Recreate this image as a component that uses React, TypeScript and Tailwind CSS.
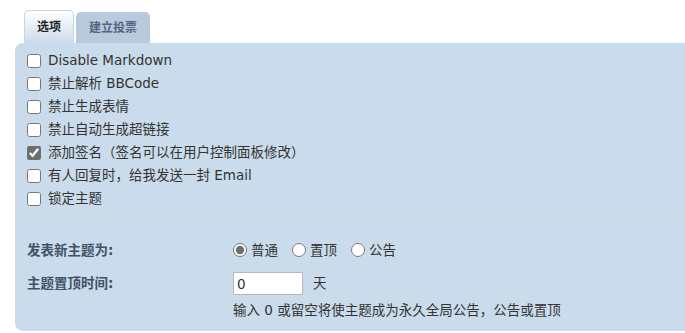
import React from "react";

const font = { fontFamily: '"DejaVu Sans", Verdana, "Noto Sans CJK SC", sans-serif' };

const options = [
  { label: "Disable Markdown", checked: false },
  { label: "禁止解析 BBCode", checked: false },
  { label: "禁止生成表情", checked: false },
  { label: "禁止自动生成超链接", checked: false },
  { label: "添加签名（签名可以在用户控制面板修改）", checked: true },
  { label: "有人回复时，给我发送一封 Email", checked: false },
  { label: "锁定主题", checked: false },
];

export default function App() {
  return (
    <div className="w-[685px] h-[333px] bg-white overflow-hidden text-[13.5px] text-[#333]" style={font}>
      <div className="flex items-end pl-[24px] pt-[10px] gap-[2px] h-[43px]">
        <div className="h-[33px] px-[12px] flex items-center rounded-t-[5px] border border-b-0 border-[#c4d6e6] bg-gradient-to-b from-[#ffffff] to-[#cadceb] font-bold text-[#222] text-[12px]">
          选项
        </div>
        <div className="h-[31px] px-[13px] flex items-center rounded-t-[5px] bg-[#b8cadb] font-bold text-[#536482] text-[12px]">
          建立投票
        </div>
      </div>
      <div className="ml-[15px] bg-[#cadceb] rounded-l-[8px] pt-[6px] pl-[12px] h-[288px]">
        <div className="flex flex-col">
          {options.map((o) => (
            <label key={o.label} className="h-[23px] flex items-center gap-[7px]">
              <input
                type="checkbox"
                defaultChecked={o.checked}
                className="w-[14px] h-[14px] m-0 accent-[#6e6e6e]"
              />
              <span className="leading-none">{o.label}</span>
            </label>
          ))}
        </div>
        <div className="mt-[9px] border-t border-dashed border-[#d2d2d2]" />
        <div className="mt-[18px] flex items-center h-[24px]">
          <div className="w-[206px] font-bold text-[#425067]">发表新主题为:</div>
          <div className="flex items-center gap-[14px]">
            <label className="flex items-center gap-[4px]">
              <input type="radio" name="t" defaultChecked className="w-[14px] h-[14px] m-0 accent-[#6e6e6e]" />
              <span>普通</span>
            </label>
            <label className="flex items-center gap-[4px]">
              <input type="radio" name="t" className="w-[14px] h-[14px] m-0 accent-[#6e6e6e]" />
              <span>置顶</span>
            </label>
            <label className="flex items-center gap-[4px]">
              <input type="radio" name="t" className="w-[14px] h-[14px] m-0 accent-[#6e6e6e]" />
              <span>公告</span>
            </label>
          </div>
        </div>
        <div className="mt-[10px] flex items-start">
          <div className="w-[206px] font-bold text-[#425067] h-[23px] flex items-center">主题置顶时间:</div>
          <div className="flex flex-col">
            <div className="flex items-center gap-[10px]">
              <input
                type="text"
                defaultValue="0"
                className="w-[70px] h-[23px] bg-white border border-[#b4bac0] px-[3px] text-[13.5px] text-[#333] outline-none"
                style={font}
              />
              <span>天</span>
            </div>
            <div className="mt-[7px] leading-[16px]">输入 0 或留空将使主题成为永久全局公告，公告或置顶</div>
          </div>
        </div>
      </div>
    </div>
  );
}
